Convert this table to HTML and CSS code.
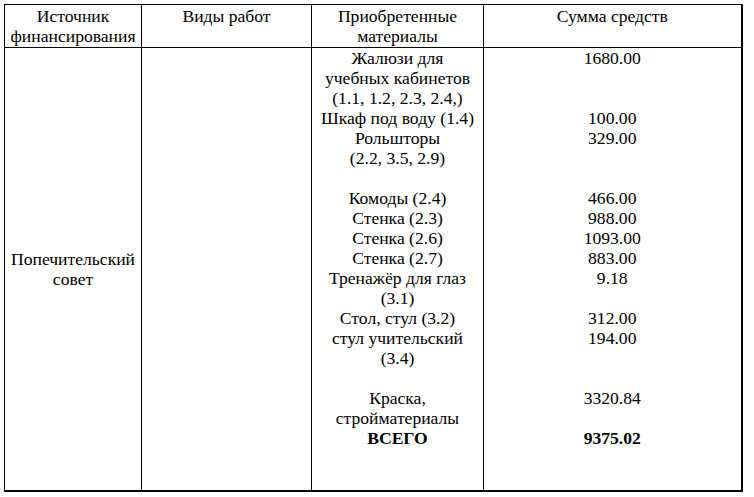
FILE: index.html
```html
<!DOCTYPE html>
<html lang="ru">
<head>
<meta charset="utf-8">
<title>Попечительский совет</title>
<link rel="stylesheet" href="styles.css">
</head>
<body>
<div class="page">
<table class="funds">
  <colgroup>
    <col class="c-source">
    <col class="c-works">
    <col class="c-materials">
    <col class="c-sum">
  </colgroup>
  <thead>
    <tr>
      <th>Источник<br>финансирования</th>
      <th>Виды работ</th>
      <th>Приобретенные<br>материалы</th>
      <th>Сумма средств</th>
    </tr>
  </thead>
  <tbody>
    <tr>
      <td class="source">Попечительский<br>совет</td>
      <td class="works"></td>
      <td class="materials">
        <div class="line">Жалюзи для</div>
        <div class="line">учебных кабинетов</div>
        <div class="line">(1.1, 1.2, 2.3, 2.4,)</div>
        <div class="line">Шкаф под воду (1.4)</div>
        <div class="line">Рольшторы</div>
        <div class="line">(2.2, 3.5, 2.9)</div>
        <div class="line"></div>
        <div class="line">Комоды (2.4)</div>
        <div class="line">Стенка (2.3)</div>
        <div class="line">Стенка (2.6)</div>
        <div class="line">Стенка (2.7)</div>
        <div class="line">Тренажёр для глаз</div>
        <div class="line">(3.1)</div>
        <div class="line">Стол, стул (3.2)</div>
        <div class="line">стул учительский</div>
        <div class="line">(3.4)</div>
        <div class="line"></div>
        <div class="line">Краска,</div>
        <div class="line">стройматериалы</div>
        <div class="line total">ВСЕГО</div>
      </td>
      <td class="sums">
        <div class="line">1680.00</div>
        <div class="line"></div>
        <div class="line"></div>
        <div class="line">100.00</div>
        <div class="line">329.00</div>
        <div class="line"></div>
        <div class="line"></div>
        <div class="line">466.00</div>
        <div class="line">988.00</div>
        <div class="line">1093.00</div>
        <div class="line">883.00</div>
        <div class="line">9.18</div>
        <div class="line"></div>
        <div class="line">312.00</div>
        <div class="line">194.00</div>
        <div class="line"></div>
        <div class="line"></div>
        <div class="line">3320.84</div>
        <div class="line"></div>
        <div class="line total">9375.02</div>
      </td>
    </tr>
  </tbody>
</table>
</div>
</body>
</html>
```
FILE: styles.css
```css
html, body {
  margin: 0;
  padding: 0;
  background: #ffffff;
  font-family: "Liberation Serif", "Times New Roman", serif;
}

.page {
  padding: 4px 0 0 4px;
}

.funds {
  border-collapse: collapse;
  table-layout: fixed;
  width: 737px;
  font-family: "Liberation Serif", "Times New Roman", serif;
  font-size: 17.6px;
  line-height: 20px;
  color: #000000;
}

.c-source { width: 137px; }
.c-works { width: 170px; }
.c-materials { width: 172px; }
.c-sum { width: 258px; }

.funds th,
.funds td {
  border: 1px solid #000000;
  padding: 0;
  text-align: center;
}

.funds th {
  font-weight: normal;
  vertical-align: top;
  height: 41px;
  padding-top: 1px;
}

.funds td {
  vertical-align: top;
  height: 442px;
}

.funds td.source {
  vertical-align: middle;
}

.funds tbody tr td {
  border-bottom-width: 2px;
}

.funds tr > :last-child {
  border-right-width: 2px;
}

.line {
  height: 20px;
  white-space: nowrap;
}

.total {
  font-weight: bold;
}
```
